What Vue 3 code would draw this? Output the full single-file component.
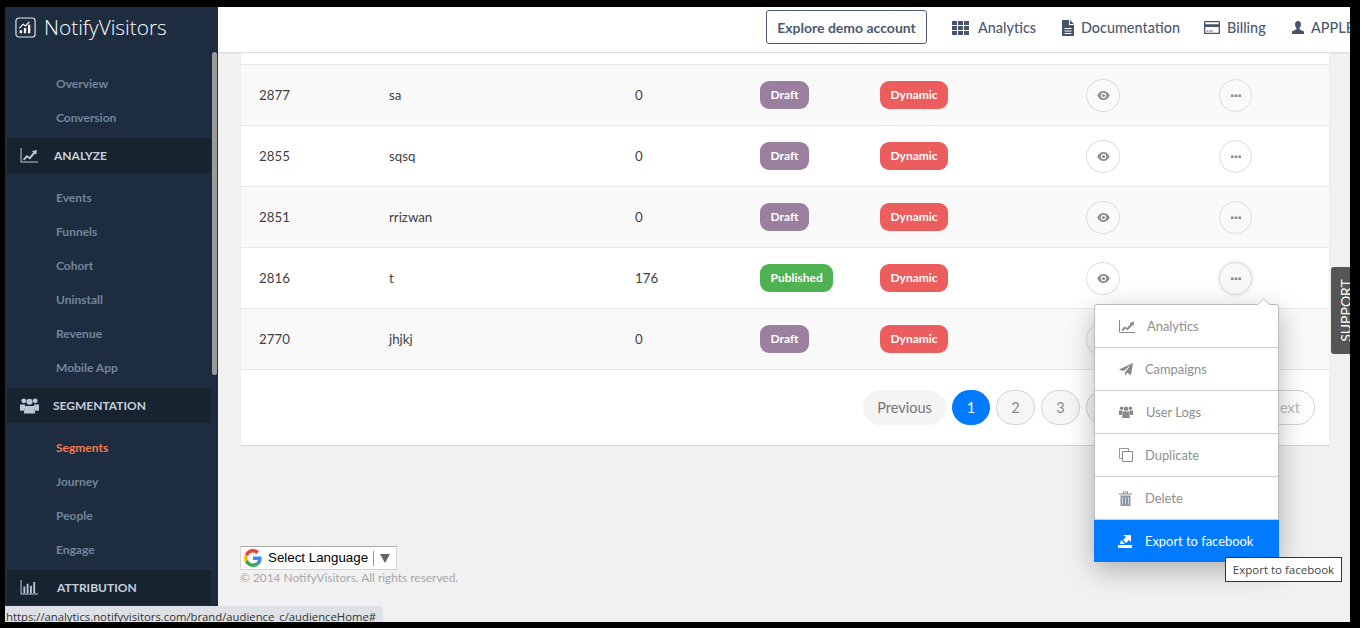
<script setup>
const groupA = ['Overview', 'Conversion']
const groupB = ['Events', 'Funnels', 'Cohort', 'Uninstall', 'Revenue', 'Mobile App']
const groupC = ['Segments', 'Journey', 'People', 'Engage']
const rows = [
  { id: 2877, name: 'sa', count: 0, status: 'Draft' },
  { id: 2855, name: 'sqsq', count: 0, status: 'Draft' },
  { id: 2851, name: 'rrizwan', count: 0, status: 'Draft' },
  { id: 2816, name: 't', count: 176, status: 'Published', hot: true },
  { id: 2770, name: 'jhjkj', count: 0, status: 'Draft' }
]
const pages = ['1', '2', '3', '4', '5', '6']
</script>

<template>
  <div class="frame">
    <div class="screen">
      <aside class="side">
        <div class="logo">
          <svg class="logo-icon" viewBox="0 0 22 22" width="21" height="21">
            <rect x="1" y="1" width="20" height="20" rx="3" fill="none" stroke="#e8edf2" stroke-width="1.2" />
            <path d="M5 17v-3h2.400v3zM9.300 17v-5.500h2.400V17zM13.600 17V8h2.400v9z" fill="#fff" />
            <path d="M4.500 12l4-4.500 2.400 1.800L15 5" fill="none" stroke="#fff" stroke-width="1.200" />
          </svg>
          <span>NotifyVisitors</span>
        </div>
        <div class="thumb"></div>
        <ul class="sub first">
          <li v-for="g in groupA" :key="g">{{ g }}</li>
        </ul>
        <div class="sec">
          <svg viewBox="0 0 20 16" width="19" height="15" class="sec-ic">
            <path d="M1 0v15h18" fill="none" stroke="#b9c7d6" stroke-width="1.100" />
            <path d="M3 12l4-4.500 3 2 4-5-1.500-1.200L18 2l-.6 5-1.400-1.200-5.600 6.400-3-2-3 3z" fill="#b9c7d6" />
          </svg>
          <span class="sec-t t1">ANALYZE</span>
        </div>
        <ul class="sub">
          <li v-for="g in groupB" :key="g">{{ g }}</li>
        </ul>
        <div class="sec">
          <svg viewBox="0 0 20 17" width="19" height="17" class="sec-ic">
            <g fill="#b9c7d6">
              <circle cx="4" cy="3.600" r="2.600" /><circle cx="16" cy="3.600" r="2.600" /><circle cx="10" cy="4.600" r="3.200" />
              <path d="M0 7.500h5.500L4 14H0zM20 7.500h-5.500L16 14h4zM5 9h10l1 8H4z" />
            </g>
          </svg>
          <span class="sec-t t2">SEGMENTATION</span>
        </div>
        <ul class="sub">
          <li v-for="g in groupC" :key="g" :class="{ on: g === 'Segments' }">{{ g }}</li>
        </ul>
        <div class="sec">
          <svg viewBox="0 0 20 16" width="19" height="15" class="sec-ic">
            <path d="M1 0v15h18" fill="none" stroke="#b9c7d6" stroke-width="1.100" />
            <path d="M3.500 7h2v7h-2zM7 4h2v10H7zM10.500 6h2v8h-2zM14 2h2v12h-2z" fill="#b9c7d6" />
          </svg>
          <span class="sec-t t3">ATTRIBUTION</span>
        </div>
      </aside>

      <div class="main">
        <header class="top">
          <button class="demo">Explore demo account</button>
          <nav class="nav">
            <a class="n1">
              <svg viewBox="0 0 17 14" width="17" height="14">
                <path fill="#46536b" d="M0 0h5v4H0zM6 0h5v4H6zM12 0h5v4h-5zM0 5h5v4H0zM6 5h5v4H6zM12 5h5v4h-5zM0 10h5v4H0zM6 10h5v4H6zM12 10h5v4h-5z" />
              </svg>
              <span>Analytics</span>
            </a>
            <a class="n2">
              <svg viewBox="0 0 12 16" width="12" height="16">
                <path fill="#46536b" fill-rule="evenodd" d="M0 0h7v5h5v11H0zM8 0l4 4H8zM2.500 8v1h7V8zM2.500 10.500v1h7v-1zM2.500 13v1h7v-1z" />
              </svg>
              <span>Documentation</span>
            </a>
            <a class="n3">
              <svg viewBox="0 0 16 13" width="16" height="13">
                <path fill="#46536b" fill-rule="evenodd" d="M1 0h14a1 1 0 0 1 1 1v11a1 1 0 0 1-1 1H1a1 1 0 0 1-1-1V1a1 1 0 0 1 1-1zM1.300 1.300v2h13.400v-2zM1.300 6v5.700h13.400V6zM2.500 9.500h2v1h-2zM5.500 9.500h3v1h-3z" />
              </svg>
              <span>Billing</span>
            </a>
            <a class="n4">
              <svg viewBox="0 0 12 13" width="12" height="13">
                <path fill="#46536b" d="M6 0c1.800 0 3 1.300 3 3.300C9 5 8 6.800 7.500 7.300v1L12 10.500V13H0v-2.500l4.500-2.200v-1C4 6.800 3 5 3 3.300 3 1.300 4.200 0 6 0z" />
              </svg>
              <span>APPLE HOME</span>
            </a>
          </nav>
        </header>

        <div class="content">
          <section class="card">
            <div class="stub"></div>
            <div v-for="r in rows" :key="r.id" class="row">
              <span>{{ r.id }}</span>
              <span>{{ r.name }}</span>
              <span>{{ r.count }}</span>
              <span><b class="badge" :class="r.status === 'Draft' ? 'draft' : 'pub'">{{ r.status }}</b></span>
              <span><b class="badge dyn">Dynamic</b></span>
              <span>
                <i class="circle">
                  <svg viewBox="0 0 14 10" width="13" height="9">
                    <path fill="#8f8f8f" fill-rule="evenodd" d="M7 0c3.200 0 5.600 2.400 7 5-1.400 2.600-3.800 5-7 5S1.400 7.600 0 5c1.400-2.600 3.800-5 7-5zm0 2a3 3 0 1 0 0 6 3 3 0 0 0 0-6zm0 1.200a1.800 1.800 0 1 1 0 3.600 1.800 1.800 0 0 1 0-3.600z" />
                  </svg>
                </i>
              </span>
              <span>
                <i class="circle dot" :class="{ hot: r.hot }">
                  <svg viewBox="0 0 10 3" width="10" height="3">
                    <path fill="#8a8a8a" d="M0 .5h2.600V3H0zM3.700 .5h2.600V3H3.700zM7.400 .5H10V3H7.400z" />
                  </svg>
                </i>
              </span>
            </div>
            <div class="pager">
              <a class="pg prev">Previous</a>
              <a v-for="p in pages" :key="p" class="pg num" :class="{ cur: p === '1' }">{{ p }}</a>
              <a class="pg gap">…</a>
              <a class="pg next">Next</a>
            </div>
          </section>

          <footer class="foot">
            <div class="lang">
              <svg viewBox="0 0 48 48" width="18" height="18">
                <path fill="#EA4335" d="M24 9.500c3.500 0 6.700 1.200 9.200 3.600l6.900-6.900C35.900 2.400 30.500 0 24 0 14.600 0 6.500 5.400 2.600 13.200l8 6.200C12.500 13.700 17.800 9.500 24 9.500z" />
                <path fill="#4285F4" d="M47 24.500c0-1.600-.1-3.100-.4-4.500H24v9h12.900c-.6 3-2.200 5.500-4.700 7.200l7.700 6C44.400 37.900 47 31.800 47 24.500z" />
                <path fill="#FBBC05" d="M10.500 28.600c-.5-1.400-.8-3-.8-4.600s.3-3.200.8-4.600l-8-6.200C.9 16.500 0 20.100 0 24s.9 7.500 2.600 10.800z" />
                <path fill="#34A853" d="M24 48c6.500 0 11.900-2.100 15.900-5.800l-7.700-6c-2.100 1.400-4.900 2.300-8.200 2.300-6.200 0-11.500-4.200-13.400-9.900l-8 6.200C6.500 42.600 14.600 48 24 48z" />
              </svg>
              <span class="lang-t">Select Language</span>
              <i class="lang-sep"></i>
              <i class="lang-tri"></i>
            </div>
            <p class="copy">© 2014 NotifyVisitors. All rights reserved.</p>
          </footer>
        </div>

        <div class="support"><span>SUPPORT</span></div>

        <div class="menu">
          <i class="arrow"></i>
          <a class="mi">
            <svg viewBox="0 0 16 13" width="16" height="13">
              <path d="M.5 0v12.500H16" fill="none" stroke="#8a8a8a" />
              <path d="M2.500 10l3-3.500 2.500 1.500 3.500-4L10.500 3 15 1.500 14.500 6l-1-1-4.800 5.200-2.500-1.600-2.400 2.600z" fill="#8a8a8a" />
            </svg>
            <span class="l1">Analytics</span>
          </a>
          <a class="mi">
            <svg viewBox="0 0 14 13" width="14" height="13">
              <path fill="#888" d="M14 0l-2 12-4-2.300L6 13V9.200L12 2 4.500 8 0 6.500z" />
            </svg>
            <span class="l2">Campaigns</span>
          </a>
          <a class="mi">
            <svg viewBox="0 0 14 12" width="14" height="12">
              <g fill="#888">
                <circle cx="2.600" cy="2.200" r="1.800" /><circle cx="11.400" cy="2.200" r="1.800" /><circle cx="7" cy="2.800" r="2.200" />
                <path d="M0 4.500h3.600L3 9H0zM14 4.500h-3.600L11 9h3zM3.800 5.500h6.400l.6 6.500H3.200z" />
              </g>
            </svg>
            <span class="l3">User Logs</span>
          </a>
          <a class="mi">
            <svg viewBox="0 0 14 14" width="14" height="14">
              <path d="M3.500 10.500H.5V.5h9v3" fill="none" stroke="#999" />
              <path d="M3.500 3.500h10v10h-10z" fill="#fff" stroke="#8a8a8a" />
            </svg>
            <span class="l2">Duplicate</span>
          </a>
          <a class="mi">
            <svg viewBox="0 0 13 15" width="13" height="15">
              <path d="M0 2.500h13v1H0zM4 2.500V.5h5v2H8V1.400H5v1.100z" fill="#8a8a8a" />
              <path d="M1.500 4.500h10V15h-10z" fill="#8a96a6" />
              <path d="M3.500 6v7.500M6.500 6v7.500M9.500 6v7.500" stroke="#cfd3d9" />
            </svg>
            <span class="l3">Delete</span>
          </a>
          <a class="mi act">
            <svg viewBox="0 0 14 13" width="14" height="13">
              <path fill="#fff" d="M0 10h14v3H0zM5 0h8v7l-2-2-3 3-3-3 3-3zM2 9l1-4 2 2 2 2z" />
            </svg>
            <span class="l4">Export to facebook</span>
          </a>
        </div>

        <div class="tip">Export to facebook</div>
      </div>

      <div class="status">https://analytics.notifyvisitors.com/brand/audience_c/audienceHome#</div>
    </div>
  </div>
</template>

<style>
html, body { margin: 0; background: #000; overflow: hidden; }
</style>

<style scoped>
.frame {
  width: 1362px;
  height: 628px;
  box-sizing: border-box;
  padding: 7px 12px 6px 5px;
  background: #000;
  font-family: Lato, "Liberation Sans", sans-serif;
  overflow: hidden;
  position: relative;
}
.frame::after {
  content: "";
  position: absolute;
  top: 0;
  right: 0;
  bottom: 0;
  width: 2px;
  background: #fff;
}
.screen {
  display: flex;
  height: 100%;
  position: relative;
}
.side {
  width: 213px;
  flex: none;
  background: #1d2d3f;
  position: relative;
  overflow: hidden;
}
.logo {
  height: 41px;
  margin-bottom: 4px;
  padding-left: 10px;
  box-sizing: border-box;
  display: flex;
  align-items: center;
  gap: 8px;
  color: #fff;
  font-family: "Open Sans", sans-serif;
  font-size: 20.800px;
  font-weight: 300;
  line-height: 1;
}
.logo-icon { flex: none; }
.thumb {
  position: absolute;
  left: 207px;
  top: 45px;
  width: 5px;
  height: 323px;
  background: #9a9a9a;
  border-radius: 3px;
}
.sub {
  list-style: none;
  margin: 0 0 3px;
  padding: 8px 0 0 51px;
}
.sub.first { padding-top: 15px; }
.sub li {
  height: 34px;
  line-height: 34px;
  font-size: 12px;
  font-weight: 700;
  color: #71869e;
}
.sub li.on { color: #f47b4f; }
.sec {
  height: 35px;
  margin: 0 7px 0 2px;
  background: #17242f;
  display: flex;
  align-items: center;
  padding-left: 13px;
  color: #c5d0dc;
  font-size: 12px;
  font-weight: 700;
}
.sec-ic { flex: none; }
.sec-t { white-space: nowrap; }
.t1 { margin-left: 15px; }
.t2 { margin-left: 14px; }
.t3 { margin-left: 18px; }

.main {
  flex: 1;
  min-width: 0;
  position: relative;
  background: #f1f1f1;
  display: flex;
  flex-direction: column;
  overflow: hidden;
}
.top {
  height: 45px;
  flex: none;
  box-sizing: border-box;
  padding: 0 0 5px 548px;
  background: #fff;
  box-shadow: 0 1px 2px rgba(0, 0, 0, .1);
  display: flex;
  align-items: center;
  position: relative;
  z-index: 2;
  white-space: nowrap;
  color: #4c5a72;
  font-size: 14.400px;
  font-weight: 500;
}
.demo {
  flex: none;
  width: 161px;
  height: 34px;
  padding: 0;
  background: #fff;
  border: 1px solid #4c5a72;
  border-radius: 3px;
  color: #4c5a72;
  font: 700 14px Lato, sans-serif;
}
.nav { display: flex; align-items: center; margin: 1px 0 0 25px; }
.nav a { display: flex; align-items: center; flex: none; }
.n1 { width: 110px; gap: 9px; }
.n2 { width: 142px; gap: 7px; }
.n3 { width: 88px; gap: 7px; }
.n4 { gap: 7px; }

.content {
  flex: 1;
  padding: 1px 21px 0 23px;
  min-height: 0;
}
.card {
  background: #fff;
  box-shadow: 0 1px 1px rgba(0, 0, 0, .1);
  height: 392px;
  box-sizing: border-box;
}
.stub { height: 11px; border-bottom: 1px solid #e6e6e6; }
.row {
  display: grid;
  grid-template-columns: 130px 246px 125px 120px 206px 133px 1fr;
  align-items: center;
  height: 61px;
  box-sizing: border-box;
  padding-left: 18px;
  border-bottom: 1px solid #e8e8e8;
  font-size: 13.300px;
  color: #3f3f3f;
}
.row:nth-child(even) { background: #f9f9f9; }
.badge {
  display: inline-block;
  height: 28px;
  line-height: 28px;
  padding: 0 10.500px;
  border-radius: 9px;
  color: #fff;
  font-size: 12px;
  font-weight: 700;
  vertical-align: middle;
}
.draft { background: #9a7f9f; }
.pub { background: #4eb252; }
.dyn { background: #ec5d5e; }
.circle {
  display: flex;
  align-items: center;
  justify-content: center;
  width: 34px;
  height: 33px;
  box-sizing: border-box;
  background: #fff;
  border: 1px solid #ddd;
  border-radius: 50%;
}
.dot { width: 33px; }
.row:nth-child(even) .circle { background: #fafafa; }
.circle.hot { background: #f8f8f8; box-shadow: 0 0 4px rgba(0, 0, 0, .14); }
.pager {
  display: flex;
  justify-content: flex-end;
  gap: 6px;
  padding: 20px 14px 0 0;
}
.pg {
  height: 35px;
  line-height: 33px;
  box-sizing: border-box;
  border: 1px solid #d2d2d2;
  border-radius: 18px;
  color: #888;
  font-size: 14.500px;
  text-align: center;
  background: #f6f6f6;
}
.num { width: 39px; }
.gap { width: 27px; }
.cur { background: #007bff; border-color: #007bff; color: #fff; width: 38px; }
.prev { width: 83px; background: #f4f4f4; border-color: #f4f4f4; color: #777; }
.next { width: 61px; background: #fff; color: #bbb; }

.foot { margin-top: 101px; }
.lang {
  width: 157px;
  height: 24px;
  box-sizing: border-box;
  margin-left: -1px;
  display: flex;
  align-items: center;
  padding-left: 3px;
  background: #fff;
  border: 1px solid #d4d4d4;
  border-top-color: #aaa;
  font: 13.330px "Liberation Sans", Arial, sans-serif;
  color: #000;
}
.lang-t { margin: -2px 0 0 6px; white-space: nowrap; }
.lang-sep { width: 1px; height: 15px; background: #999; margin-left: 5px; }
.lang-tri {
  width: 0;
  height: 0;
  margin-left: 6px;
  border-left: 5px solid transparent;
  border-right: 5px solid transparent;
  border-top: 9px solid #666;
}
.copy {
  margin: 0 0 0 -1px;
  font-size: 11.900px;
  line-height: 16px;
  color: #a8a8a8;
}

.support {
  position: absolute;
  z-index: 3;
  left: 1113px;
  top: 260px;
  width: 20px;
  height: 87px;
  background: #555;
  border-radius: 3px 0 0 3px;
  display: flex;
  align-items: center;
  justify-content: center;
}
.support span {
  display: block;
  transform: rotate(-90deg) translateY(4px);
  color: #fff;
  font-size: 14px;
  white-space: nowrap;
}

.menu {
  position: absolute;
  z-index: 4;
  left: 876px;
  top: 297px;
  width: 185px;
  height: 258px;
  box-sizing: border-box;
  border: 1px solid #bbb;
  border-radius: 3px;
  background: #fff;
  box-shadow: 0 8px 28px rgba(0, 0, 0, .28);
}
.arrow {
  position: absolute;
  right: 10px;
  top: -5px;
  width: 8px;
  height: 8px;
  background: #fff;
  border-left: 1px solid #ccc;
  border-top: 1px solid #ccc;
  transform: rotate(45deg);
}
.mi {
  display: flex;
  align-items: center;
  height: 43px;
  box-sizing: border-box;
  padding-left: 24px;
  border-bottom: 1px solid #ccc;
  color: #8e8e8e;
  font-size: 12.900px;
}
.mi svg { flex: none; }
.l1 { margin-left: 12px; }
.l2 { margin-left: 12px; }
.l3 { margin-left: 13px; }
.l4 { margin-left: 13px; }
.act {
  height: 42px;
  margin: 0 -1px;
  padding-left: 24px;
  border-bottom: 0;
  background: #007bff;
  color: #fff;
}
.tip {
  position: absolute;
  z-index: 5;
  left: 1007px;
  top: 550px;
  width: 117px;
  height: 25px;
  box-sizing: border-box;
  text-align: center;
  border: 1px solid #333;
  background: #fff;
  color: #444;
  font: 11.500px/23px "Open Sans", sans-serif;
  white-space: nowrap;
}
.status {
  position: absolute;
  z-index: 6;
  left: 0;
  bottom: 0;
  width: 378px;
  height: 16px;
  box-sizing: border-box;
  padding-left: 1px;
  background: #dee1e6;
  border-radius: 0 4px 0 0;
  color: #333;
  font: 11.300px/22px "Open Sans", sans-serif;
  overflow: hidden;
  white-space: nowrap;
}
</style>
